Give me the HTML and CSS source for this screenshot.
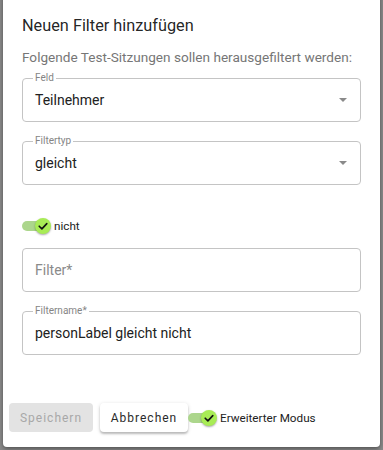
FILE: index.html
```html
<!DOCTYPE html>
<html lang="de">
<head>
<meta charset="utf-8">
<title>Neuen Filter hinzufügen</title>
<link rel="stylesheet" href="styles.css">
</head>
<body>
<div class="dialog">
  <div class="content">
    <h2 class="title">Neuen Filter hinzufügen</h2>
    <p class="subtitle">Folgende Test-Sitzungen sollen herausgefiltert werden:</p>
    <div class="field select field-first">
      <span class="label">Feld</span>
      <span class="value">Teilnehmer</span>
      <span class="arrow"></span>
    </div>
    <div class="field select">
      <span class="label">Filtertyp</span>
      <span class="value">gleicht</span>
      <span class="arrow"></span>
    </div>
    <div class="toggle-row">
      <span class="switch"><span class="track"></span><span class="thumb"><svg viewBox="0 0 16 16" width="16" height="16"><path d="M4.2 8.2 L6.9 10.9 L11.8 5.6" fill="none" stroke="#111" stroke-width="1.6" stroke-linecap="round" stroke-linejoin="round"/></svg></span></span>
      <span class="toggle-label">nicht</span>
    </div>
    <div class="field field-empty">
      <span class="placeholder">Filter*</span>
    </div>
    <div class="field">
      <span class="label">Filtername*</span>
      <span class="value">personLabel gleicht nicht</span>
    </div>
  </div>
  <div class="actions">
    <button class="btn btn-disabled" disabled>Speichern</button>
    <button class="btn btn-raised">Abbrechen</button>
    <span class="switch"><span class="track"></span><span class="thumb"><svg viewBox="0 0 16 16" width="16" height="16"><path d="M4.2 8.2 L6.9 10.9 L11.8 5.6" fill="none" stroke="#111" stroke-width="1.6" stroke-linecap="round" stroke-linejoin="round"/></svg></span></span>
    <span class="toggle-label">Erweiterter Modus</span>
  </div>
</div>
</body>
</html>
```

FILE: styles.css
```css
* { box-sizing: border-box; }
html, body { margin: 0; padding: 0; }
body {
  background: #8b8b8b;
  font-family: Roboto, "Liberation Sans", sans-serif;
  width: 383px;
  height: 450px;
  overflow: hidden;
}
.dialog {
  margin: -8px 0 0 3px;
  width: 377px;
  background: #fff;
  border-radius: 4px;
  box-shadow: 0 3px 6px rgba(0,0,0,0.25), 0 1px 3px rgba(0,0,0,0.2);
}
.content {
  padding: 24px 19px 0;
  display: flex;
  flex-direction: column;
}
.title {
  margin: 0;
  font-size: 16.3px;
  line-height: 20px;
  font-weight: 400;
  color: rgba(0,0,0,0.87);
}
.subtitle {
  margin: 12px 0 0;
  font-size: 13.6px;
  line-height: 18px;
  color: #767676;
  white-space: nowrap;
}
.field {
  position: relative;
  height: 44px;
  border: 1px solid #c4c4c4;
  border-radius: 4px;
  display: flex;
  align-items: center;
  padding: 0 12px;
  margin-top: 19px;
}
.field-first { margin-top: 12px; }
.label {
  position: absolute;
  left: 10px;
  top: -6px;
  padding: 0 2px;
  background: #fff;
  font-size: 10px;
  line-height: 10px;
  color: #858585;
}
.value {
  flex: 1;
  font-size: 14px;
  color: #212121;
}
.placeholder {
  font-size: 14px;
  color: #8a8a8a;
}
.arrow {
  width: 0;
  height: 0;
  border-left: 4px solid transparent;
  border-right: 4px solid transparent;
  border-top: 4px solid #8a8a8a;
  margin-right: 1px;
}
.toggle-row {
  display: flex;
  align-items: center;
  height: 20px;
  margin-top: 31px;
}
.toggle-row + .field { margin-top: 12px; }
.switch {
  position: relative;
  display: inline-block;
  width: 29px;
  height: 16px;
  flex: none;
}
.track {
  position: absolute;
  left: 0;
  top: 3px;
  width: 26px;
  height: 10px;
  border-radius: 5px;
  background: #acd68c;
}
.thumb {
  position: absolute;
  left: 13px;
  top: 0;
  width: 16px;
  height: 16px;
  border-radius: 50%;
  background: #a8ec55;
  box-shadow: 0 1px 2px rgba(0,0,0,0.35);
}
.thumb svg { display: block; }
.toggle-label {
  margin-left: 3px;
  font-size: 11.7px;
  color: #222;
}
.actions {
  display: flex;
  align-items: center;
  margin-top: 48px;
  padding: 0 6px 15px;
}
.btn {
  height: 29px;
  border: none;
  border-radius: 4px;
  font-family: Roboto, "Liberation Sans", sans-serif;
  font-size: 12px;
  font-weight: 400;
  letter-spacing: 1px;
  padding: 0;
  margin: 0;
}
.btn-disabled {
  width: 84px;
  background: #e3e3e3;
  color: #a8a8a8;
}
.btn-raised {
  width: 88px;
  margin-left: 7px;
  background: #fff;
  color: #2a2a2a;
  box-shadow: 0 2px 2px rgba(0,0,0,0.2), 0 1px 4px rgba(0,0,0,0.14);
}
```
